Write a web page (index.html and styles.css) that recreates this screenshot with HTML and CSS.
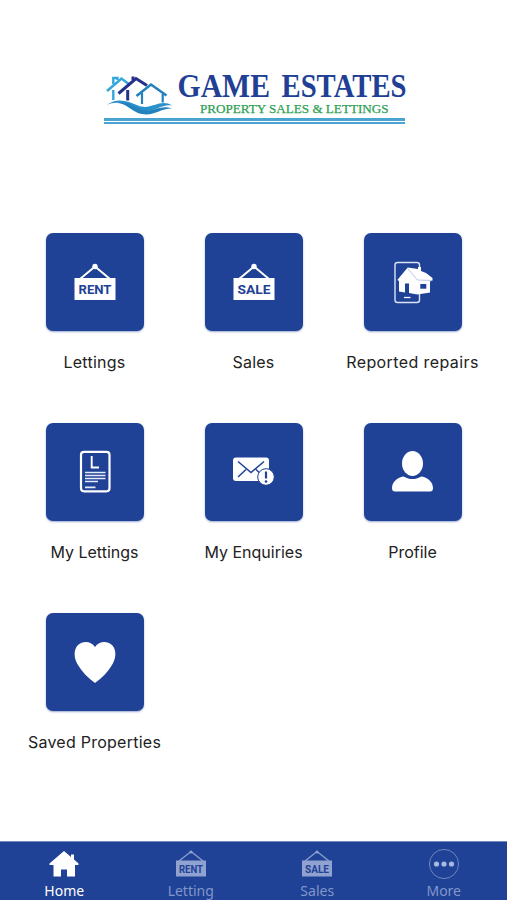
FILE: index.html
```html
<!DOCTYPE html>
<html lang="en">
<head>
  <meta charset="UTF-8" />
  <meta name="viewport" content="width=device-width, initial-scale=1" />
  <title>Game Estates</title>
  <link rel="stylesheet" href="styles.css">
</head>
<body>
  <header class="header">
    <svg class="logo" viewBox="0 0 304 57" role="img" aria-label="Game Estates">
      <!-- houses -->
      <g fill="none">
        <path d="M3 30L17.500 17.500L26 24" stroke="#35a6dc" stroke-width="2.500" />
        <path d="M9.300 29V39M9.300 23V17H13.500V19" stroke="#35a6dc" stroke-width="2.400" />
        <path d="M14.500 32.500L32 17.500L43 24.500" stroke="#252f8c" stroke-width="3" />
        <path d="M23.700 29V39.500M29 19V15.500" stroke="#252f8c" stroke-width="3" />
        <path d="M32.500 35L47 23.500L62.500 34.500" stroke="#2381bd" stroke-width="2.600" />
        <path d="M38 32V43M58.700 33V41.500" stroke="#2381bd" stroke-width="2.200" />
      </g>
      <!-- waves -->
      <path d="M3 44C13 36 24 40 34 44.500C47 50 56 37 68 44.500C57 42 48 54 34 48.500C22 43 13 39 3 44Z" fill="#2a91cc" />
      <path d="M14 42C24 40 30 46 37 48.500C49 52 56 43 68 47.500C56 47 49 57 34 52C24 47 22 43 14 42Z" fill="#2381bd" />
      <text class="logo-name" x="73.500" y="35.800" textLength="92.500" lengthAdjust="spacingAndGlyphs">GAME</text>
      <text class="logo-name" x="177.500" y="35.800" textLength="125" lengthAdjust="spacingAndGlyphs">ESTATES</text>
      <text class="logo-tag" x="96" y="52" textLength="188.500" lengthAdjust="spacingAndGlyphs">PROPERTY SALES &amp; LETTINGS</text>
    </svg>
    <div class="logo-rule"></div>
  </header>

  <main class="menu">
    <a class="menu-item">
      <span class="tile">
        <svg width="98" height="98" viewBox="0 0 98 98">
          <path d="M34 46L49 33.500L64 46" fill="none" stroke="#fff" stroke-width="2" />
          <circle cx="49" cy="33.500" r="2.700" fill="#fff" />
          <rect x="28.500" y="45" width="41" height="22" fill="#fff" />
          <text class="sign-text" x="32.500" y="61.300" textLength="33" lengthAdjust="spacingAndGlyphs">RENT</text>
        </svg>
      </span>
      <span class="label label-lettings">Lettings</span>
    </a>
    <a class="menu-item">
      <span class="tile">
        <svg width="98" height="98" viewBox="0 0 98 98">
          <path d="M34 46L49 33.500L64 46" fill="none" stroke="#fff" stroke-width="2" />
          <circle cx="49" cy="33.500" r="2.700" fill="#fff" />
          <rect x="28.500" y="45" width="41" height="22" fill="#fff" />
          <text class="sign-text" x="32.500" y="61.300" textLength="33" lengthAdjust="spacingAndGlyphs">SALE</text>
        </svg>
      </span>
      <span class="label label-sales">Sales</span>
    </a>
    <a class="menu-item">
      <span class="tile">
        <svg width="98" height="98" viewBox="0 0 98 98">
          <rect x="31" y="29.500" width="24.500" height="40" rx="2.500" fill="none" stroke="#dbe4f6" stroke-width="1.400" />
          <path d="M40 64.500H46.500" stroke="#fff" stroke-width="1.300" />
          <path d="M33.300 47L43.700 34.500L54 36V34H57V38L62 40L68.500 45V47.500L66 48.500V59.500L53.500 61.500L45 60V50.500H41V59.500L35 58.500V48Z" fill="#fff" />
          <path d="M43.700 35.500L53.500 47L68 47.500" fill="none" stroke="#9cafd8" stroke-width=".7" />
          <rect x="56.300" y="51" width="6" height="4.700" fill="#1f4196" />
        </svg>
      </span>
      <span class="label label-repairs">Reported repairs</span>
    </a>
    <a class="menu-item">
      <span class="tile">
        <svg width="98" height="98" viewBox="0 0 98 98">
          <rect x="35" y="28.800" width="28.500" height="39.500" rx="3" fill="none" stroke="#fff" stroke-width="2.200" />
          <path d="M45.700 33V44.500H53" fill="none" stroke="#fff" stroke-width="1.900" />
          <path d="M39 49.500H59.500M39 52.500H59.500M39 55.500H59.500M39 58.500H52M39 64.300H49.500" stroke="#e4eaf7" stroke-width="1.700" />
        </svg>
      </span>
      <span class="label">My Lettings</span>
    </a>
    <a class="menu-item">
      <span class="tile">
        <svg width="98" height="98" viewBox="0 0 98 98">
          <rect x="28" y="34.500" width="36" height="23.500" rx="3" fill="#fff" />
          <path d="M33 38.500L46 49.500L59 38.500M33 54L41 46.500M59 54L51 46.500" fill="none" stroke="#1f4196" stroke-width="1.500" />
          <circle cx="61" cy="54" r="8.300" fill="#fff" stroke="#1f4196" />
          <path d="M61 48.500V55.500" stroke="#1f4196" stroke-width="2.200" />
          <circle cx="61" cy="58.500" r="1.300" fill="#1f4196" />
        </svg>
      </span>
      <span class="label">My Enquiries</span>
    </a>
    <a class="menu-item">
      <span class="tile">
        <svg width="98" height="98" viewBox="0 0 98 98">
          <ellipse cx="48.500" cy="40.500" rx="10.500" ry="12.500" fill="#fff" />
          <path d="M39 53.500C42 54 43 56 48.500 56S55 54 58 53.500C65 55 69 60 69 65C69 67.500 68 68.500 66 68.500H31C29 68.500 28 67.500 28 65C28 60 32 55 39 53.500Z" fill="#fff" />
        </svg>
      </span>
      <span class="label">Profile</span>
    </a>
    <a class="menu-item">
      <span class="tile">
        <svg width="98" height="98" viewBox="0 0 98 98">
          <path d="M49 34C45 28 37 27.500 32 32C27 37 28 46 32 52C36 59 42 65 49 70C56 65 62 59 66 52C70 46 71 37 66 32C61 27.500 53 28 49 34Z" fill="#fff" />
        </svg>
      </span>
      <span class="label label-saved">Saved Properties</span>
    </a>
  </main>

  <nav class="tabs">
    <a class="tab active">
      <svg width="32" height="32" viewBox="0 0 32 32">
        <path d="M16 3L23 9V6.500H26V11.500L30.500 15.500V17H27V28.500H19V21.500H13V28.500H5.500V17H1.500V15.500Z" fill="#fff" />
      </svg>
      <span>Home</span>
    </a>
    <a class="tab">
      <svg width="32" height="32" viewBox="0 0 32 32">
        <path d="M4 13L16 3.500L28 13" fill="none" stroke="#8fa2d0" stroke-width="1.300" />
        <circle cx="16" cy="4" r="1.600" fill="#8fa2d0" />
        <rect x="1" y="12.500" width="30" height="16" fill="#8fa2d0" />
        <text class="tab-sign" x="4" y="24.500" textLength="24" lengthAdjust="spacingAndGlyphs">RENT</text>
      </svg>
      <span>Letting</span>
    </a>
    <a class="tab">
      <svg width="32" height="32" viewBox="0 0 32 32">
        <path d="M4 13L16 3.500L28 13" fill="none" stroke="#8fa2d0" stroke-width="1.300" />
        <circle cx="16" cy="4" r="1.600" fill="#8fa2d0" />
        <rect x="1" y="12.500" width="30" height="16" fill="#8fa2d0" />
        <text class="tab-sign" x="4" y="24.500" textLength="24" lengthAdjust="spacingAndGlyphs">SALE</text>
      </svg>
      <span>Sales</span>
    </a>
    <a class="tab">
      <svg width="32" height="32" viewBox="0 0 32 32">
        <circle cx="16" cy="16" r="14.600" fill="none" stroke="#7087bd" stroke-width="1" />
        <g fill="#a9b9df">
          <circle cx="8.500" cy="16" r="2.600" />
          <circle cx="16" cy="16" r="2.600" />
          <circle cx="23.500" cy="16" r="2.600" />
        </g>
      </svg>
      <span>More</span>
    </a>
  </nav>
</body>
</html>
```
FILE: styles.css
```css
* {
  box-sizing: border-box;
}

body {
  margin: 0;
  height: 900px;
  display: flex;
  flex-direction: column;
  background: #fff;
  color: #222;
  font-family: Inter, sans-serif;
  overflow: hidden;
}

.header {
  height: 233px;
  padding: 61px 0 0 104px;
}

.logo {
  display: block;
  width: 304px;
  height: 57px;
  overflow: visible;
}

.logo-name {
  font: bold 33px "Liberation Serif", serif;
  fill: #213f94;
}

.logo-tag {
  font: 13px "Liberation Serif", serif;
  fill: #2ba052;
  stroke: #2ba052;
  stroke-width: .25px;
}

.logo-rule {
  width: 301px;
  height: 6px;
  border-top: 3px solid #4ba3d0;
  border-bottom: 2px solid #4ba3d0;
}

.menu {
  flex: 1;
  display: grid;
  grid-template-columns: repeat(3, 159px);
  grid-auto-rows: 190px;
  justify-content: center;
  align-content: start;
}

.menu-item {
  display: flex;
  flex-direction: column;
  align-items: center;
}

.tile {
  width: 98px;
  height: 98px;
  border-radius: 7px;
  background: #1f4196;
  box-shadow: 0 1px 2px rgba(31, 65, 150, .45);
}

.tile svg {
  display: block;
}

.sign-text {
  font: bold 13.5px Roboto, sans-serif;
  fill: #1f4196;
}

.label {
  margin-top: 20px;
  font-size: 16px;
  line-height: 22px;
  white-space: nowrap;
}

.label-lettings,
.label-saved {
  letter-spacing: .25px;
}

.label-sales {
  letter-spacing: .2px;
}

.label-repairs {
  letter-spacing: .4px;
}

.tabs {
  height: 59px;
  display: flex;
  padding-left: 1px;
  background: #1f4196;
  border-top: 1px solid #7188bd;
}

.tab {
  flex: 1;
  display: flex;
  flex-direction: column;
  align-items: center;
  padding-top: 6px;
  color: #8297c9;
  font: 14px/22px "Noto Sans", sans-serif;
}

.tab svg {
  flex: none;
}

.tab.active {
  color: #fff;
}

.tab-sign {
  font: bold 10px Roboto, sans-serif;
  fill: #1f4196;
}
```
